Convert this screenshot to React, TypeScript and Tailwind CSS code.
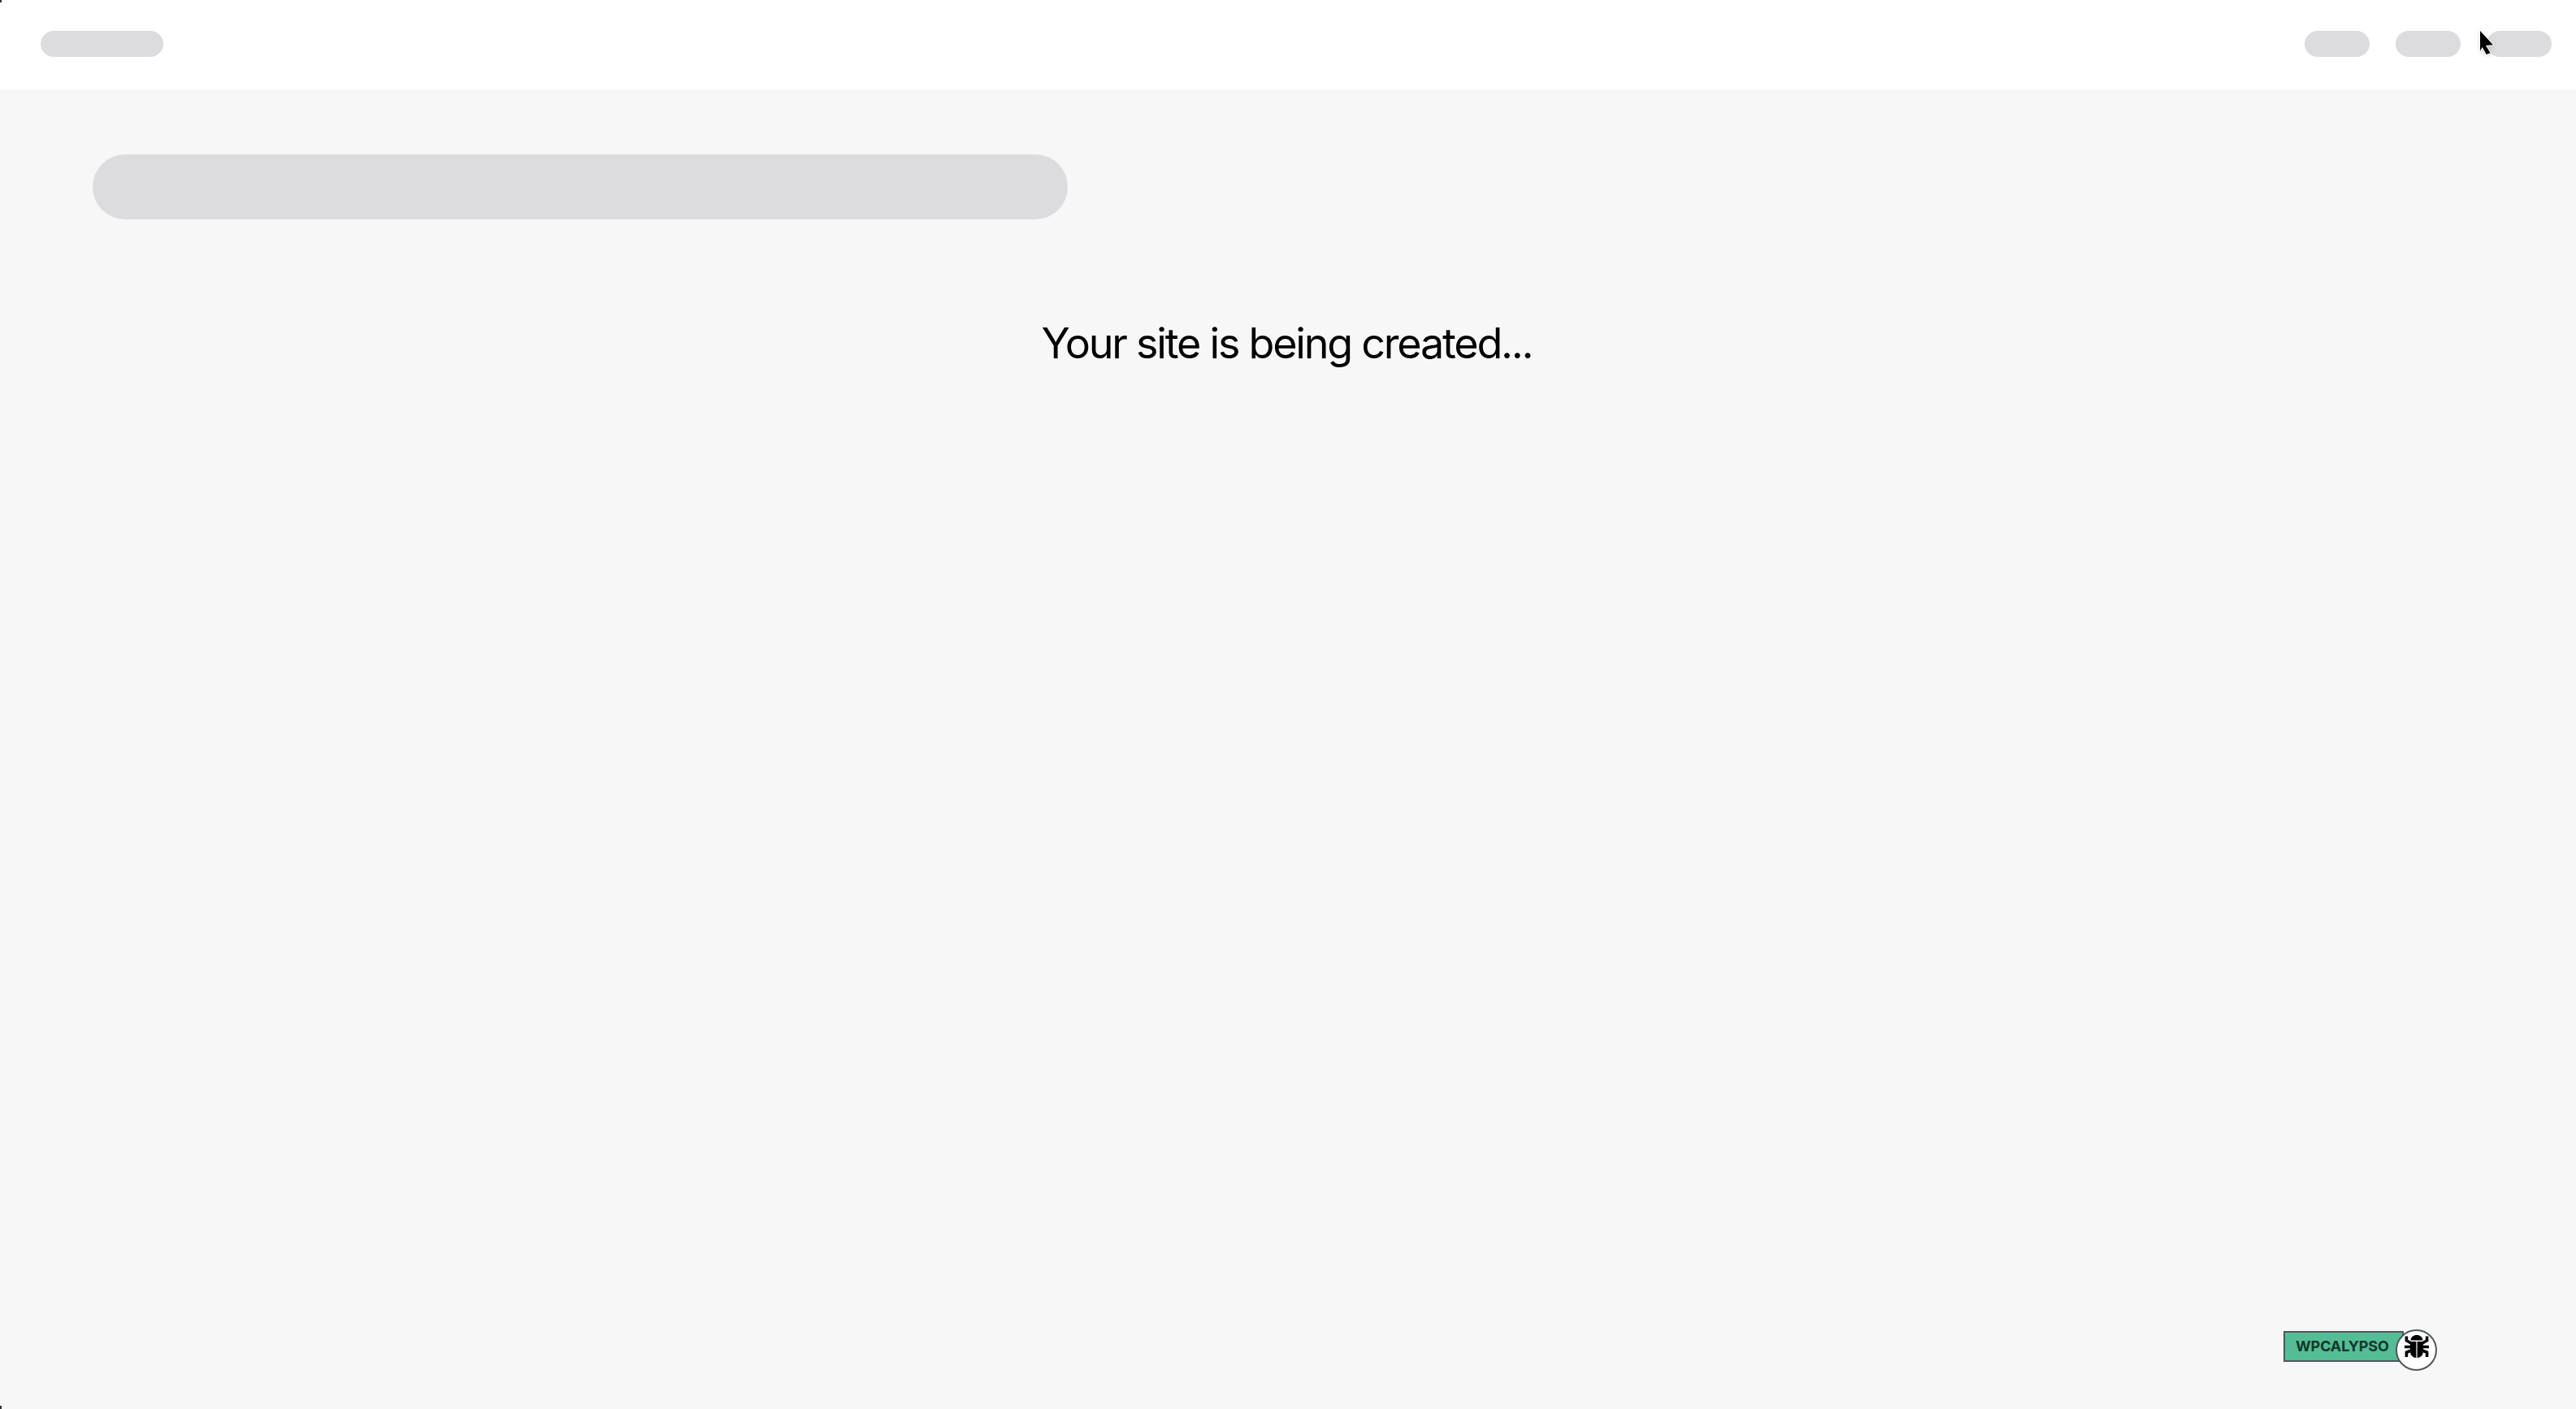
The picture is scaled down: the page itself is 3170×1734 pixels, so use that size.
const BugIcon = () => (
  <svg viewBox="0 0 30 28" className="w-[30px] h-[28px] shrink-0" fill="#000">
    <path d="M7.5 6.5C7.8 2.6 11 0 15 0s7.2 2.6 7.5 6.5z" />
    <path d="M7 8h7.4v20C9.8 27.6 7 24.5 7 20zM15.6 8H23v12c0 4.5-2.8 7.6-7.4 8z" />
    <g fill="none" stroke="#000" strokeWidth="3.6">
      <path d="M2.4 1.5v5.2L8 10M27.6 1.5v5.2L22 10" />
      <path d="M0 14.5h8M30 14.5h-8" />
      <path d="M2.4 27v-5.7L8 19M27.6 27v-5.7L22 19" />
    </g>
  </svg>
);

const CursorIcon = () => (
  <svg viewBox="0 0 26 36" className="w-[26px] h-[36px] drop-shadow-sm">
    <path
      d="M3 3L19 20.3L10 21L15.7 30.3L10.7 32L5.7 23L3 27.7z"
      fill="#000"
      stroke="#fff"
      strokeWidth="2"
      strokeLinejoin="round"
      paintOrder="stroke"
    />
  </svg>
);

export default function App() {
  return (
    <div className="relative min-h-[1734px] bg-[#f7f7f7] font-['Inter',sans-serif] overflow-hidden">
      <header className="h-[110px] bg-white flex items-center justify-between pl-[50px] pr-[30px] pb-[2px]">
        <div className="w-[151px] h-[32px] rounded-full bg-[#dcdcde]" />
        <div className="flex gap-[32px]">
          <div className="w-[80px] h-[32px] rounded-full bg-[#dcdcde]" />
          <div className="w-[80px] h-[32px] rounded-full bg-[#dcdcde]" />
          <div className="w-[80px] h-[32px] rounded-full bg-[#dcdcde]" />
        </div>
      </header>

      <main className="pt-[80px]">
        <div className="ml-[114px] w-[1200px] h-[80px] rounded-full bg-[#dcdcde]" />
        <h1 className="mt-[123px] pr-[3px] text-center text-[52px] leading-[60px] tracking-[-2.2px] font-normal text-black">
          Your site is being created...
        </h1>
      </main>

      {/* env badge, floats over the page */}
      <div className="absolute left-[2810px] top-[1638px] w-[148px] h-[38px] bg-[#54bd96] border-2 border-[#50575e] flex items-center pl-[13px]">
        <span className="text-[18px] font-bold tracking-[-0.1px] text-[#10372a] leading-none">WPCALYPSO</span>
      </div>
      <div className="absolute left-[2948px] top-[1636px] w-[51px] h-[51px] rounded-full bg-white border-2 border-[#50575e] flex items-center justify-center pb-[10px]">
        <BugIcon />
      </div>

      <div className="absolute left-[3049px] top-[35px]">
        <CursorIcon />
      </div>

      {/* dark specks left at the window corners */}
      <div className="absolute left-0 top-0 w-[2px] h-[3px] bg-[#333]" />
      <div className="absolute left-0 bottom-0 w-[2px] h-[4px] bg-[#333]" />
    </div>
  );
}
